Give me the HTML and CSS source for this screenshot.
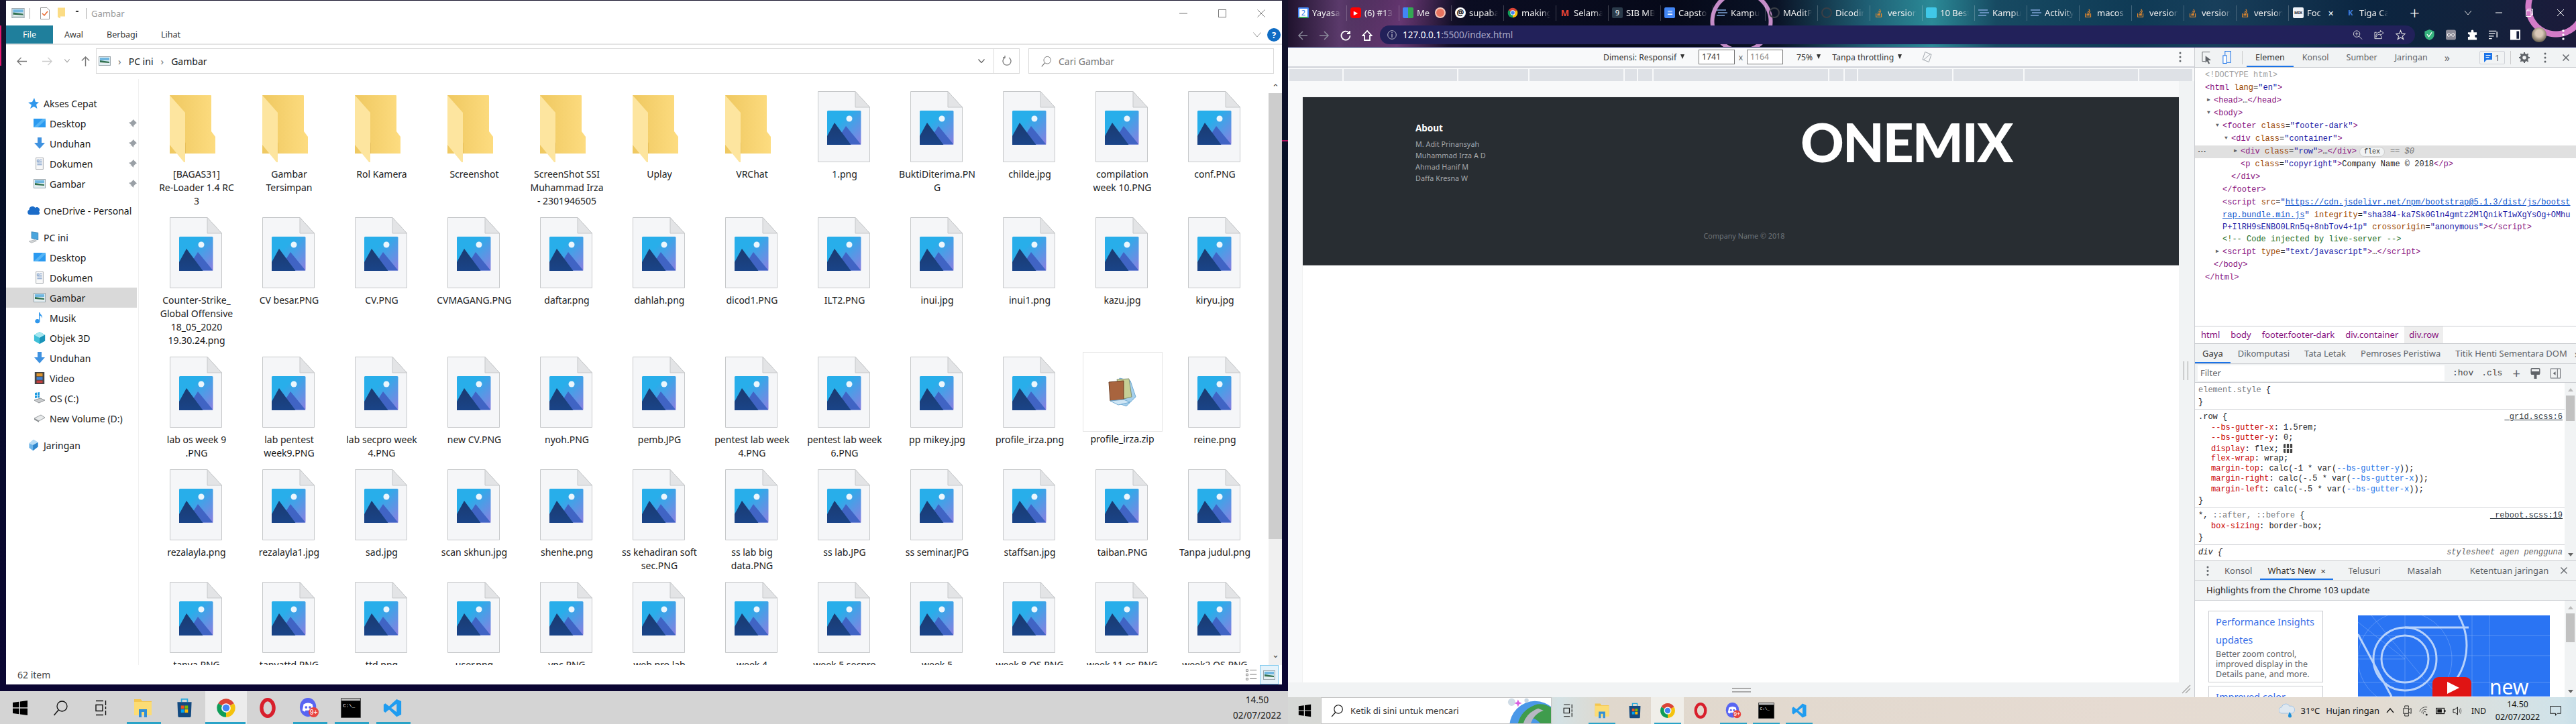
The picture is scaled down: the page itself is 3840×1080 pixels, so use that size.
FILE: index.html
```html
<!DOCTYPE html>
<html lang="en">
<head>
  <meta charset="UTF-8" />
  <title>Gambar</title>
  <link rel="stylesheet" href="styles.css">
</head>
<body>

<svg class="defs" width="0" height="0">
  <defs>
    <linearGradient id="sky" x1="0" y1="0" x2="1" y2="1"><stop offset="0.35" stop-color="#28aeea"/><stop offset="1" stop-color="#8a7fe0"/></linearGradient>
    <linearGradient id="navy" x1="0" y1="0" x2="0" y2="1"><stop offset="0" stop-color="#1a3a70"/><stop offset="1" stop-color="#1a4488"/></linearGradient>
    <linearGradient id="fold" x1="0" y1="0" x2="1" y2="0"><stop offset="0" stop-color="#efc860"/><stop offset="1" stop-color="#fddc80"/></linearGradient>
    <symbol id="file" viewBox="0 0 78 106">
      <path d="M.5.5H56L77.500 24V105.500H.5Z" fill="#f5f6f8" stroke="#c6c8ca"/>
      <path d="M56 .5V24H77.500Z" fill="#e3e4e6" stroke="#c6c8ca"/>
      <rect x="14" y="29" width="50.500" height="50.500" rx="1.500" fill="url(#sky)"/>
      <circle cx="47" cy="41" r="4.500" fill="#fff" fill-opacity=".9"/>
      <path d="M33 66 42 52 64.500 79.500H48Z" fill="#4064c4"/>
      <path d="M14 67 25 47 49.500 80H14Z" fill="url(#navy)"/>
    </symbol>
    <symbol id="folder" viewBox="0 0 78 106">
      <path d="M0 6H61Q62 6 62 7V60L68 68V93H0Z" fill="url(#fold)"/>
      <path d="M22 93V80L24 76V93Z" fill="#e8c05a"/>
      <path d="M0 6 23 32V107L22 107 0 80Z" fill="#fde59f"/>
    </symbol>
    <symbol id="pic" viewBox="0 0 18 14">
      <rect x=".5" y=".5" width="17" height="13" fill="#dfeff5" stroke="#9aa5ab"/>
      <rect x="2" y="2" width="14" height="4" fill="#6fb6e0"/>
      <path d="M2 6 16 8V12H2Z" fill="#31704f"/>
      <path d="M2 9 16 10V12H2Z" fill="#e8eef0"/>
    </symbol>
    <symbol id="star" viewBox="0 0 18 18"><path d="M10 1 12 7 17 7.500 13 11 14.500 17 9.500 14 4 17 6 11.500 1 8 7 7Z" fill="#2f97ec"/></symbol>
    <symbol id="desktop" viewBox="0 0 18 14"><rect width="18" height="13" fill="#2b9af0"/><path d="M0 13 14 0H18V2L6 13Z" fill="#55b4f5"/></symbol>
    <symbol id="down" viewBox="0 0 18 18"><path d="M6 0H12V8H17L9 17 1 8H6Z" fill="#3f92e0"/></symbol>
    <symbol id="doc" viewBox="0 0 18 20"><path d="M3 .5H15V19.500H3Z" fill="#f8f8f8" stroke="#9ea3a8"/><path d="M5 4H8V7H5ZM9 4H13M9 6H13M5 9H13M5 12H13" stroke="#5f88bd" fill="none"/></symbol>
    <symbol id="pin" viewBox="0 0 14 14"><path d="M8 0 14 6 12 7 9 10 8.500 13 4.500 9 1 13 5 8.500 1 5 4 4.500 7 2Z" fill="#9aa0a6"/></symbol>
    <symbol id="cloud" viewBox="0 0 22 18"><path d="M5 17A5 5 0 0 1 3 7.500 6 6 0 0 1 14 4 5 5 0 0 1 21 11 3.500 3.500 0 0 1 18 17Z" fill="#1b6cc8"/></symbol>
    <symbol id="pc" viewBox="0 0 20 24"><path d="M6 1 19 3V17L6 14Z" fill="#4aa5dd" stroke="#2d79ad"/><path d="M1 20 12 17 16 19 6 23Z" fill="#d3d6d8" stroke="#a4a8ab"/></symbol>
    <symbol id="note" viewBox="0 0 14 20"><path d="M6 1H7.500C8 5 13 6 11 11 11 8 9 7 7.500 6.500V16A4 3.500 0 1 1 6 13Z" fill="#2f97ec"/></symbol>
    <symbol id="cube" viewBox="0 0 18 20"><path d="M9 0 18 5V15L9 20 0 15V5Z" fill="#3fc0d8"/><path d="M9 0 18 5 9 10 0 5Z" fill="#a5e6ef"/><path d="M9 10 18 5V15L9 20Z" fill="#1a93b8"/></symbol>
    <symbol id="film" viewBox="0 0 16 20"><rect width="16" height="20" fill="#444"/><rect x="3" y="2" width="10" height="5" fill="#e0952d"/><rect x="3" y="8" width="10" height="5" fill="#3f7fd0"/><rect x="3" y="14" width="10" height="4" fill="#c43d3d"/></symbol>
    <symbol id="drive-c" viewBox="0 0 18 18"><path d="M1 12 10 9 17 12 8 16Z" fill="#c9ccce" stroke="#8f9396"/><path d="M2 1 5 .5V4L2 4.500ZM6 .5 9 0V4L6 4.500ZM2 5.500 5 5V8.500L2 9ZM6 5 9 4.500V8L6 8.500Z" fill="#1e9be0"/></symbol>
    <symbol id="drive" viewBox="0 0 18 12"><path d="M1 6 11 1 17 5 8 10Z" fill="#e8eaeb" stroke="#979b9e"/><path d="M1 6 8 10V12L1 8Z" fill="#8a8e91"/></symbol>
    <symbol id="net" viewBox="0 0 18 22"><path d="M9 1 17 6V14L8 21 1 16V8Z" fill="#6db4e8"/><path d="M9 1 17 6 8 11 1 8Z" fill="#b6dcf5"/><path d="M8 11 17 6V14L8 21Z" fill="#2f86cc"/></symbol>

    <symbol id="win" viewBox="0 0 24 24"><path d="M1 4 10.500 2.700V11.300H1ZM12 2.500 23 1V11.300H12ZM1 12.700H10.500V21.300L1 20ZM12 12.700H23V23L12 21.500Z" fill="#000"/></symbol>
    <symbol id="lens" viewBox="0 0 24 24"><circle cx="14.500" cy="9.500" r="7.500" fill="none" stroke="#111" stroke-width="1.300"/><path d="M9.300 15 2.500 23" stroke="#111" stroke-width="1.500"/></symbol>
    <symbol id="tview" viewBox="0 0 24 24"><path d="M5 1.500H16M5 22.500H16M5 7.500H15V16.500H5ZM19.500 1V8M19.500 10V14M19.500 16V23" stroke="#111" stroke-width="1.400" fill="none"/></symbol>
    <symbol id="explorer" viewBox="0 0 28 30"><path d="M1 2H11L13 5H27V25H1Z" fill="#f4c64f"/><path d="M1 6H27V26H1Z" fill="#fcdc74"/><path d="M8 29V17H20V29H16V21H12V29Z" fill="#2f8fd8"/></symbol>
    <symbol id="store" viewBox="0 0 28 34"><path d="M9 7V2H19V7" fill="none" stroke="#27a9dc" stroke-width="2"/><path d="M2 7H26L25 31Q25 33 23 33H5Q3 33 3 31Z" fill="#134a80"/><rect x="8" y="13" width="5.500" height="5.500" fill="#f25022"/><rect x="14.500" y="13" width="5.500" height="5.500" fill="#7fba00"/><rect x="8" y="19.500" width="5.500" height="5.500" fill="#00a4ef"/><rect x="14.500" y="19.500" width="5.500" height="5.500" fill="#ffb900"/></symbol>
    <symbol id="chrome" viewBox="0 0 24 24">
      <path d="M2.500 6.500A11 11 0 0 1 21.500 6.500L12 12Z" fill="#db4437"/>
      <path d="M21.500 6.500A11 11 0 0 1 12 23L12 12Z" fill="#f4c20d"/>
      <path d="M12 23A11 11 0 0 1 2.500 6.500L12 12Z" fill="#0f9d58"/>
      <circle cx="12" cy="12" r="5.500" fill="#fff"/><circle cx="12" cy="12" r="4.200" fill="#4285f4"/>
    </symbol>
    <symbol id="opera" viewBox="0 0 24 28"><ellipse cx="12" cy="14" rx="8.500" ry="11.500" fill="none" stroke="#d81f2c" stroke-width="5"/></symbol>
    <symbol id="discord" viewBox="0 0 30 32">
      <ellipse cx="13" cy="15" rx="13" ry="15" fill="#5865f2"/>
      <path d="M6 10Q13 6 20 10L22 20 18 22 17 20H9L8 22 4 20Z" fill="#fff"/>
      <circle cx="10" cy="15" r="2" fill="#5865f2"/><circle cx="16" cy="15" r="2" fill="#5865f2"/>
      <circle cx="22" cy="23" r="8" fill="#e8433f"/>
      <text x="22" y="27" font-size="11" font-family="Liberation Sans" fill="#fff" text-anchor="middle">9+</text>
    </symbol>
    <symbol id="cmd" viewBox="0 0 28 28"><rect width="28" height="28" fill="#000" stroke="#8d8d8d"/><rect x="1" y="1" width="26" height="3" fill="#bbb"/><text x="3" y="13" font-size="7" font-family="Liberation Mono" fill="#fff">C:\_</text></symbol>
    <symbol id="vscode" viewBox="0 0 24 24"><path d="M17 1.500 8 10 3.500 6.500 1.500 8V16L3.500 17.500 8 14 17 22.500 22.500 20V4ZM17 7V17L10.500 12Z" fill="#1f9cf0" fill-rule="evenodd"/></symbol>

    <symbol id="stack" viewBox="0 0 16 18"><path d="M3 10V16H12V10M5 13.500H10M5 11.500 10 12M5.500 9 10 10.500M7 6 10.500 9M9 3 11 7.500" stroke="#e2892f" stroke-width="1.300" fill="none"/></symbol>
    <symbol id="gh" viewBox="0 0 16 16"><circle cx="8" cy="8" r="7" fill="none" stroke="#3a3f46" stroke-width="2"/></symbol>
    <symbol id="lines" viewBox="0 0 16 12"><path d="M0 2H14M2 6H16M0 10H12" stroke="#7fa4d8" stroke-width="1.500"/></symbol>
  </defs>
</svg>

<!-- left monitor -->
<div class="screen">
  <div class="desk">
    <div class="peek-pink"></div>
    <div class="peek-right"></div>
    <div class="explorer">

      <div class="title-row">
        <svg class="t-pic"><use href="#pic"/></svg>
        <span class="t-sep"></span>
        <svg class="t-check" viewBox="0 0 14 18"><path d="M.5.5H10L13.500 4V17.500H.5Z" fill="#fff" stroke="#999"/><path d="M3 9 6 12 11 6" stroke="#e8662a" stroke-width="1.500" fill="none"/></svg>
        <svg class="t-fold" viewBox="0 0 12 16"><path d="M0 0H11V13H4V16L0 14Z" fill="#fbdc85"/></svg>
        <span class="t-drop"></span>
        <span class="t-sep"></span>
        <span class="t-name">Gambar</span>
        <span class="win-btns">
          <svg viewBox="0 0 12 12"><path d="M0 6H12" stroke="#777"/></svg>
          <svg viewBox="0 0 12 12"><rect x=".5" y=".5" width="11" height="11" fill="none" stroke="#777"/></svg>
          <svg viewBox="0 0 12 12"><path d="M.5.5 11.500 11.500M11.500.5 .5 11.500" stroke="#777"/></svg>
        </span>
      </div>

      <div class="ribbon">
        <span class="rib-file">File</span>
        <span class="rib-tab">Awal</span>
        <span class="rib-tab">Berbagi</span>
        <span class="rib-tab">Lihat</span>
        <span class="rib-end">
          <svg class="rib-chev" viewBox="0 0 12 8"><path d="M.5.5 6 7 11.500.5" stroke="#999" fill="none"/></svg>
          <span class="rib-help">?</span>
        </span>
      </div>

      <div class="nav-row">
        <div class="nav-arrows">
          <svg viewBox="0 0 16 14"><path d="M16 7H2M7 1 1 7 7 13" stroke="#777" stroke-width="1.500" fill="none"/></svg>
          <svg viewBox="0 0 16 14"><path d="M0 7H14M9 1 15 7 9 13" stroke="#ccc" stroke-width="1.500" fill="none"/></svg>
          <svg class="nav-mini" viewBox="0 0 8 6"><path d="M.5.5 4 5 7.500.5" stroke="#777" fill="none"/></svg>
          <svg viewBox="0 0 14 16"><path d="M7 16V2M1 7 7 1 13 7" stroke="#777" stroke-width="1.500" fill="none"/></svg>
        </div>
        <div class="addr">
          <svg class="addr-pic"><use href="#pic"/></svg>
          <span class="crumb-gt">›</span><span>PC ini</span>
          <span class="crumb-gt">›</span><span>Gambar</span>
          <svg class="addr-chev" viewBox="0 0 10 6"><path d="M.5.5 5 5.500 9.500.5" stroke="#666" stroke-width="1.300" fill="none"/></svg>
          <span class="addr-refresh"><svg viewBox="0 0 14 16"><path d="M4 3A6 6 0 1 0 10 3M4 0V3H1" stroke="#777" stroke-width="1.300" fill="none"/></svg></span>
        </div>
        <div class="search-box">
          <svg viewBox="0 0 24 24"><use href="#lens"/></svg>
          <span>Cari Gambar</span>
        </div>
      </div>

      <div class="ex-body">
        <nav class="side">
          <div class="s-row top"><svg class="s-ic"><use href="#star"/></svg>Akses Cepat</div>
          <div class="s-row"><svg class="s-ic"><use href="#desktop"/></svg>Desktop<svg class="s-pin"><use href="#pin"/></svg></div>
          <div class="s-row"><svg class="s-ic"><use href="#down"/></svg>Unduhan<svg class="s-pin"><use href="#pin"/></svg></div>
          <div class="s-row"><svg class="s-ic"><use href="#doc"/></svg>Dokumen<svg class="s-pin"><use href="#pin"/></svg></div>
          <div class="s-row"><svg class="s-ic"><use href="#pic"/></svg>Gambar<svg class="s-pin"><use href="#pin"/></svg></div>
          <div class="s-row top gap"><svg class="s-ic"><use href="#cloud"/></svg>OneDrive - Personal</div>
          <div class="s-row top gap"><svg class="s-ic"><use href="#pc"/></svg>PC ini</div>
          <div class="s-row"><svg class="s-ic"><use href="#desktop"/></svg>Desktop</div>
          <div class="s-row"><svg class="s-ic"><use href="#doc"/></svg>Dokumen</div>
          <div class="s-row sel"><svg class="s-ic"><use href="#pic"/></svg>Gambar</div>
          <div class="s-row"><svg class="s-ic"><use href="#note"/></svg>Musik</div>
          <div class="s-row"><svg class="s-ic"><use href="#cube"/></svg>Objek 3D</div>
          <div class="s-row"><svg class="s-ic"><use href="#down"/></svg>Unduhan</div>
          <div class="s-row"><svg class="s-ic"><use href="#film"/></svg>Video</div>
          <div class="s-row"><svg class="s-ic"><use href="#drive-c"/></svg>OS (C:)</div>
          <div class="s-row"><svg class="s-ic"><use href="#drive"/></svg>New Volume (D:)</div>
          <div class="s-row top gap"><svg class="s-ic"><use href="#net"/></svg>Jaringan</div>
        </nav>

        <main class="files">
          <div class="item"><svg class="ico"><use href="#folder"/></svg><div class="name">[BAGAS31]<br>Re-Loader 1.4 RC<br>3</div></div>
          <div class="item"><svg class="ico"><use href="#folder"/></svg><div class="name">Gambar<br>Tersimpan</div></div>
          <div class="item"><svg class="ico"><use href="#folder"/></svg><div class="name">Rol Kamera</div></div>
          <div class="item"><svg class="ico"><use href="#folder"/></svg><div class="name">Screenshot</div></div>
          <div class="item"><svg class="ico"><use href="#folder"/></svg><div class="name">ScreenShot SSI<br>Muhammad Irza<br>- 2301946505</div></div>
          <div class="item"><svg class="ico"><use href="#folder"/></svg><div class="name">Uplay</div></div>
          <div class="item"><svg class="ico"><use href="#folder"/></svg><div class="name">VRChat</div></div>
          <div class="item"><svg class="ico"><use href="#file"/></svg><div class="name">1.png</div></div>
          <div class="item"><svg class="ico"><use href="#file"/></svg><div class="name">BuktiDiterima.PN<br>G</div></div>
          <div class="item"><svg class="ico"><use href="#file"/></svg><div class="name">childe.jpg</div></div>
          <div class="item"><svg class="ico"><use href="#file"/></svg><div class="name">compilation<br>week 10.PNG</div></div>
          <div class="item"><svg class="ico"><use href="#file"/></svg><div class="name">conf.PNG</div></div>

          <div class="item"><svg class="ico"><use href="#file"/></svg><div class="name">Counter-Strike_<br>Global Offensive<br>18_05_2020<br>19.30.24.png</div></div>
          <div class="item"><svg class="ico"><use href="#file"/></svg><div class="name">CV besar.PNG</div></div>
          <div class="item"><svg class="ico"><use href="#file"/></svg><div class="name">CV.PNG</div></div>
          <div class="item"><svg class="ico"><use href="#file"/></svg><div class="name">CVMAGANG.PNG</div></div>
          <div class="item"><svg class="ico"><use href="#file"/></svg><div class="name">daftar.png</div></div>
          <div class="item"><svg class="ico"><use href="#file"/></svg><div class="name">dahlah.png</div></div>
          <div class="item"><svg class="ico"><use href="#file"/></svg><div class="name">dicod1.PNG</div></div>
          <div class="item"><svg class="ico"><use href="#file"/></svg><div class="name">ILT2.PNG</div></div>
          <div class="item"><svg class="ico"><use href="#file"/></svg><div class="name">inui.jpg</div></div>
          <div class="item"><svg class="ico"><use href="#file"/></svg><div class="name">inui1.png</div></div>
          <div class="item"><svg class="ico"><use href="#file"/></svg><div class="name">kazu.jpg</div></div>
          <div class="item"><svg class="ico"><use href="#file"/></svg><div class="name">kiryu.jpg</div></div>

          <div class="item"><svg class="ico"><use href="#file"/></svg><div class="name">lab os week 9<br>.PNG</div></div>
          <div class="item"><svg class="ico"><use href="#file"/></svg><div class="name">lab pentest<br>week9.PNG</div></div>
          <div class="item"><svg class="ico"><use href="#file"/></svg><div class="name">lab secpro week<br>4.PNG</div></div>
          <div class="item"><svg class="ico"><use href="#file"/></svg><div class="name">new CV.PNG</div></div>
          <div class="item"><svg class="ico"><use href="#file"/></svg><div class="name">nyoh.PNG</div></div>
          <div class="item"><svg class="ico"><use href="#file"/></svg><div class="name">pemb.JPG</div></div>
          <div class="item"><svg class="ico"><use href="#file"/></svg><div class="name">pentest lab week<br>4.PNG</div></div>
          <div class="item"><svg class="ico"><use href="#file"/></svg><div class="name">pentest lab week<br>6.PNG</div></div>
          <div class="item"><svg class="ico"><use href="#file"/></svg><div class="name">pp mikey.jpg</div></div>
          <div class="item"><svg class="ico"><use href="#file"/></svg><div class="name">profile_irza.png</div></div>
          <div class="item">
            <div class="zip-frame">
              <svg class="zip-ic" viewBox="0 0 44 46">
                <path d="M18 2 34 6 42 30 28 44 12 38Z" fill="#a6d0ec" stroke="#6fa9d2"/>
                <path d="M14 4 32 3 36 30 20 34Z" fill="#c6cf96" stroke="#7f9070"/>
                <path d="M2 8 24 6 24 34 4 36Z" fill="#a8643e" stroke="#6b3d22"/>
                <path d="M4 36 24 34 34 38 16 42Z" fill="#cfe6f5" stroke="#6fa9d2"/>
              </svg>
            </div>
            <div class="name">profile_irza.zip</div>
          </div>
          <div class="item"><svg class="ico"><use href="#file"/></svg><div class="name">reine.png</div></div>

          <div class="item"><svg class="ico"><use href="#file"/></svg><div class="name">rezalayla.png</div></div>
          <div class="item"><svg class="ico"><use href="#file"/></svg><div class="name">rezalayla1.jpg</div></div>
          <div class="item"><svg class="ico"><use href="#file"/></svg><div class="name">sad.jpg</div></div>
          <div class="item"><svg class="ico"><use href="#file"/></svg><div class="name">scan skhun.jpg</div></div>
          <div class="item"><svg class="ico"><use href="#file"/></svg><div class="name">shenhe.png</div></div>
          <div class="item"><svg class="ico"><use href="#file"/></svg><div class="name">ss kehadiran soft<br>sec.PNG</div></div>
          <div class="item"><svg class="ico"><use href="#file"/></svg><div class="name">ss lab big<br>data.PNG</div></div>
          <div class="item"><svg class="ico"><use href="#file"/></svg><div class="name">ss lab.JPG</div></div>
          <div class="item"><svg class="ico"><use href="#file"/></svg><div class="name">ss seminar.JPG</div></div>
          <div class="item"><svg class="ico"><use href="#file"/></svg><div class="name">staffsan.jpg</div></div>
          <div class="item"><svg class="ico"><use href="#file"/></svg><div class="name">taiban.PNG</div></div>
          <div class="item"><svg class="ico"><use href="#file"/></svg><div class="name">Tanpa judul.png</div></div>

          <div class="item"><svg class="ico"><use href="#file"/></svg><div class="name">tanya.PNG</div></div>
          <div class="item"><svg class="ico"><use href="#file"/></svg><div class="name">tanyattd.PNG</div></div>
          <div class="item"><svg class="ico"><use href="#file"/></svg><div class="name">ttd.png</div></div>
          <div class="item"><svg class="ico"><use href="#file"/></svg><div class="name">user.png</div></div>
          <div class="item"><svg class="ico"><use href="#file"/></svg><div class="name">vpc.PNG</div></div>
          <div class="item"><svg class="ico"><use href="#file"/></svg><div class="name">web pro lab</div></div>
          <div class="item"><svg class="ico"><use href="#file"/></svg><div class="name">week 4</div></div>
          <div class="item"><svg class="ico"><use href="#file"/></svg><div class="name">week 5 secpro</div></div>
          <div class="item"><svg class="ico"><use href="#file"/></svg><div class="name">week 5</div></div>
          <div class="item"><svg class="ico"><use href="#file"/></svg><div class="name">week 8 OS.PNG</div></div>
          <div class="item"><svg class="ico"><use href="#file"/></svg><div class="name">week 11 os.PNG</div></div>
          <div class="item"><svg class="ico"><use href="#file"/></svg><div class="name">week2 OS.PNG</div></div>
        </main>

        <div class="ex-scroll">
          <span class="sb-arrow">⌃</span>
          <span class="sb-thumb"></span>
          <span class="sb-arrow low">⌄</span>
        </div>
      </div>

      <div class="status">
        <span class="st-count">62 item</span>
        <svg class="st-list" viewBox="0 0 18 24"><path d="M1 3H4V6H1ZM1 10H4V13H1ZM1 17H4V20H1ZM7 4H18M7 11H18M7 18H18" stroke="#777" fill="none"/></svg>
        <span class="st-large"><svg><use href="#pic"/></svg></span>
      </div>
    </div>
  </div>

  <div class="taskbar tb-left">
    <span class="tb-slot sys"><svg class="tb-sys"><use href="#win"/></svg></span>
    <span class="tb-slot sys"><svg class="tb-sys"><use href="#lens"/></svg></span>
    <span class="tb-slot sys"><svg class="tb-sys"><use href="#tview"/></svg></span>
    <span class="tb-slot on first-app"><svg class="tb-app"><use href="#explorer"/></svg></span>
    <span class="tb-slot"><svg class="tb-app"><use href="#store"/></svg></span>
    <span class="tb-slot on active"><svg class="tb-app"><use href="#chrome"/></svg></span>
    <span class="tb-slot"><svg class="tb-app"><use href="#opera"/></svg></span>
    <span class="tb-slot on"><svg class="tb-app"><use href="#discord"/></svg></span>
    <span class="tb-slot on"><svg class="tb-app"><use href="#cmd"/></svg></span>
    <span class="tb-slot on"><svg class="tb-app"><use href="#vscode"/></svg></span>
    <span class="tb-clock"><span>14.50</span><span>02/07/2022</span></span>
  </div>
</div>

<!-- right monitor -->
<div class="screen">
  <div class="chrome">
    <div class="wall">
      <div class="tabs">
        <div class="tab"><span class="fav f-cal">2</span><span class="tab-t">Yayasan</span></div>
        <div class="tab"><span class="fav f-yt">▶</span><span class="tab-t">(6) #13</span></div>
        <div class="tab"><span class="fav f-meet"></span><span class="tab-t short">Me</span><span class="rec"></span></div>
        <div class="tab"><span class="fav f-at">@</span><span class="tab-t">supabase</span></div>
        <div class="tab"><svg class="fav"><use href="#chrome"/></svg><span class="tab-t">making</span></div>
        <div class="tab"><span class="fav f-m">M</span><span class="tab-t">Selamat</span></div>
        <div class="tab"><span class="fav f-nine">9</span><span class="tab-t">SIB MB</span></div>
        <div class="tab"><span class="fav f-docs">≡</span><span class="tab-t">Capstone</span></div>
        <div class="tab"><svg class="fav"><use href="#lines"/></svg><span class="tab-t">Kampus</span></div>
        <div class="tab"><svg class="fav"><use href="#gh"/></svg><span class="tab-t">MAditP</span></div>
        <div class="tab"><svg class="fav"><use href="#gh"/></svg><span class="tab-t">Dicoding</span></div>
        <div class="tab"><svg class="fav"><use href="#stack"/></svg><span class="tab-t">version</span></div>
        <div class="tab"><span class="fav f-cy"></span><span class="tab-t">10 Best</span></div>
        <div class="tab"><svg class="fav"><use href="#lines"/></svg><span class="tab-t">Kampus</span></div>
        <div class="tab"><svg class="fav"><use href="#lines"/></svg><span class="tab-t">Activity</span></div>
        <div class="tab"><svg class="fav"><use href="#stack"/></svg><span class="tab-t">macos</span></div>
        <div class="tab"><svg class="fav"><use href="#stack"/></svg><span class="tab-t">version</span></div>
        <div class="tab"><svg class="fav"><use href="#stack"/></svg><span class="tab-t">version</span></div>
        <div class="tab"><svg class="fav"><use href="#stack"/></svg><span class="tab-t">version</span></div>
        <div class="tab cur"><span class="fav f-mix">MIX</span><span class="tab-t short">Foc</span><span class="tab-x">✕</span></div>
        <div class="tab cur"><span class="fav f-k">K</span><span class="tab-t">Tiga Cara</span></div>
        <span class="tab-plus">+</span>
        <span class="tab-ctl">
          <svg viewBox="0 0 12 8"><path d="M1 1 6 7 11 1" stroke="#ddd" fill="none"/></svg>
          <svg viewBox="0 0 12 8"><path d="M1 4H11" stroke="#fff"/></svg>
          <svg viewBox="0 0 12 12"><path d="M3 3V.5H10.500V9H8M.5 3H8V11.500H.5Z" stroke="#fff" fill="none"/></svg>
          <svg viewBox="0 0 12 12"><path d="M1 1 11 11M11 1 1 11" stroke="#fff"/></svg>
        </span>
      </div>
      <div class="toolbar">
        <svg class="tl" viewBox="0 0 16 16"><path d="M15 8H2M8 2 2 8 8 14" stroke="#8b8b9b" stroke-width="1.500" fill="none"/></svg>
        <svg class="tl" viewBox="0 0 16 16"><path d="M1 8H14M8 2 14 8 8 14" stroke="#8b8b9b" stroke-width="1.500" fill="none"/></svg>
        <svg class="tl" viewBox="0 0 16 16"><path d="M13 4A6.500 6.500 0 1 0 14.500 8M14 1V5H10" stroke="#fff" stroke-width="1.800" fill="none"/></svg>
        <svg class="tl" viewBox="0 0 16 16"><path d="M8 1 1.500 8H4V15H12V8H14.500Z" stroke="#fff" stroke-width="1.800" fill="none"/></svg>
        <div class="omni">
          <svg class="omni-i" viewBox="0 0 14 14"><circle cx="7" cy="7" r="6.300" stroke="#b9b9c9" fill="none"/><path d="M7 6V11M7 3V4.500" stroke="#b9b9c9" stroke-width="1.300"/></svg>
          <span class="url">127.0.0.1<span class="url-dim">:5500/index.html</span></span>
          <span class="omni-end">
            <svg viewBox="0 0 16 16"><circle cx="6.500" cy="6.500" r="5" stroke="#ddd" fill="none"/><path d="M10 10 15 15M6.500 4V9M4 6.500H9" stroke="#ddd" fill="none"/></svg>
            <svg viewBox="0 0 16 16"><path d="M10 1 15 5 10 9V7Q4 7 3 12 2 4 10 3.500ZM12 10V14H1V4H4" stroke="#ddd" fill="none"/></svg>
            <svg viewBox="0 0 16 16"><path d="M8 1 10 6 15 6.500 11 10 12.500 15 8 12 3.500 15 5 10 1 6.500 6 6Z" stroke="#ddd" stroke-width="1.200" fill="none"/></svg>
          </span>
        </div>
        <span class="ext">
          <svg viewBox="0 0 16 18"><path d="M8 0 16 3V9Q16 15 8 18 0 15 0 9V3Z" fill="#36b37e"/><path d="M4 8 7 12 12 5" stroke="#fff" stroke-width="1.500" fill="none"/></svg>
          <svg viewBox="0 0 16 16"><rect width="16" height="16" rx="3" fill="#8d8d99"/><path d="M5 5.500A2.500 2.500 0 1 0 5 10.500L11 5.500A2.500 2.500 0 1 1 11 10.500Z" stroke="#fff" fill="none"/></svg>
          <svg viewBox="0 0 16 16"><path d="M6 2Q6 0 8 0T10 2V4H15V8Q12 7 12 10T15 12V16H1V11Q4 12 4 9.500T1 7V4H6Z" fill="#fff"/></svg>
          <svg viewBox="0 0 16 16"><path d="M0 2H12M0 6H10M0 10H8M0 14H5M13 3V12" stroke="#fff" stroke-width="1.500" fill="none"/></svg>
          <svg viewBox="0 0 16 16"><path d="M1 1H15V15H1Z" stroke="#fff" stroke-width="2" fill="none"/><rect x="1" y="1" width="9" height="14" fill="#fff"/></svg>
          <span class="avatar"></span>
          <svg viewBox="0 0 4 16"><circle cx="2" cy="2" r="1.700" fill="#fff"/><circle cx="2" cy="8" r="1.700" fill="#fff"/><circle cx="2" cy="14" r="1.700" fill="#fff"/></svg>
        </span>
      </div>
    </div>

    <div class="work">
      <div class="device">
        <div class="dev-bar">
          <span>Dimensi: Responsif <i class="tri"></i></span>
          <span class="dims"><span class="dim-in">1741</span><span class="dim-x">x</span><span class="dim-in dim-grey">1164</span></span>
          <span>75% <i class="tri"></i></span>
          <span>Tanpa throttling <i class="tri"></i></span>
          <svg class="rot" viewBox="0 0 16 18"><path d="M5 1 15 5 11 17 1 13Z" stroke="#9aa0a6" fill="none"/><path d="M2 14 14 4" stroke="#9aa0a6"/></svg>
          <svg class="dev-kebab" viewBox="0 0 4 16"><circle cx="2" cy="2" r="1.500" fill="#5f6368"/><circle cx="2" cy="8" r="1.500" fill="#5f6368"/><circle cx="2" cy="14" r="1.500" fill="#5f6368"/></svg>
        </div>
        <div class="mq-bar">
          <span class="w80"></span><span class="w171"></span><span class="w106"></span><span class="w142"></span><span class="w20"></span><span class="w23"></span><span class="w262"></span><span class="w23"></span><span class="w20"></span><span class="w142"></span><span class="w106"></span><span class="w171"></span><span class="grow"></span>
        </div>
        <div class="viewport">
          <div class="page">
            <footer class="footer-dark">
              <div class="row">
                <div class="about">
                  <h3>About</h3>
                  <ul>
                    <li>M. Adit Prinansyah</li>
                    <li>Muhammad Irza A D</li>
                    <li>Ahmad Hanif M</li>
                    <li>Daffa Kresna W</li>
                  </ul>
                </div>
                <div class="brand">ONEMIX</div>
              </div>
              <p class="copyright">Company Name © 2018</p>
            </footer>
          </div>
          <div class="page-handle"></div>
        </div>
        <div class="page-foot">
          <svg class="corner" viewBox="0 0 14 14"><path d="M1 13 13 1M6 13 13 6" stroke="#aaa" stroke-width="1.500"/></svg>
          <span class="grip"></span>
        </div>
      </div>

      <aside class="devtools">
        <div class="dt-top">
          <svg class="dt-ic" viewBox="0 0 16 20"><path d="M13 1H1V16H6" stroke="#5f6368" fill="none"/><path d="M6 7 15 14 10.500 14.500 13 19 11 20 8.500 15.500 6 18Z" fill="#5f6368"/></svg>
          <svg class="dt-ic" viewBox="0 0 16 26"><rect x="4.500" y=".5" width="11" height="22" fill="none" stroke="#1a73e8" stroke-width="1.300"/><rect x=".7" y="9" width="7" height="15" fill="#fff" stroke="#1a73e8" stroke-width="1.300"/></svg>
          <span class="dt-sep"></span>
          <span class="dt-tab cur">Elemen</span>
          <span class="dt-tab">Konsol</span>
          <span class="dt-tab">Sumber</span>
          <span class="dt-tab">Jaringan</span>
          <span class="dt-more">»</span>
          <span class="dt-issues">
            <svg viewBox="0 0 12 14"><path d="M0 0H12V10H4L0 14Z" fill="#1a73e8"/><path d="M2.500 3.500H9.500M2.500 6.500H7.500" stroke="#fff"/></svg>1
          </span>
          <span class="dt-sep2"></span>
          <svg class="dt-gear" viewBox="0 0 16 16"><circle cx="8" cy="8" r="4.500" fill="none" stroke="#5f6368" stroke-width="3.500"/><path d="M8 0V3M8 13V16M0 8H3M13 8H16M2.300 2.300 4.400 4.400M11.600 11.600 13.700 13.700M13.700 2.300 11.600 4.400M4.400 11.600 2.300 13.700" stroke="#5f6368" stroke-width="2"/></svg>
          <svg class="dt-kebab" viewBox="0 0 4 16"><circle cx="2" cy="2" r="1.500" fill="#5f6368"/><circle cx="2" cy="8" r="1.500" fill="#5f6368"/><circle cx="2" cy="14" r="1.500" fill="#5f6368"/></svg>
          <svg class="dt-close" viewBox="0 0 10 10"><path d="M.5.5 9.500 9.500M9.500.5 .5 9.500" stroke="#5f6368" stroke-width="1.500"/></svg>
        </div>

        <div class="dom">
          <div class="ln l0 doctype">&lt;!DOCTYPE html&gt;</div>
          <div class="ln l0"><b>&lt;html</b> <u>lang</u>=<s>"en"</s><b>&gt;</b></div>
          <div class="ln l1"><i class="tw">▶</i><b>&lt;head&gt;</b>…<b>&lt;/head&gt;</b></div>
          <div class="ln l1"><i class="tw">▼</i><b>&lt;body&gt;</b></div>
          <div class="ln l2"><i class="tw">▼</i><b>&lt;footer</b> <u>class</u>=<s>"footer-dark"</s><b>&gt;</b></div>
          <div class="ln l3"><i class="tw">▼</i><b>&lt;div</b> <u>class</u>=<s>"container"</s><b>&gt;</b></div>
          <div class="ln l4 picked"><em class="dots">•••</em><i class="tw">▶</i><b>&lt;div</b> <u>class</u>=<s>"row"</s><b>&gt;</b>…<b>&lt;/div&gt;</b><span class="flexpill">flex</span><span class="eq">== <em>$0</em></span></div>
          <div class="ln l4"><b>&lt;p</b> <u>class</u>=<s>"copyright"</s><b>&gt;</b>Company Name © 2018<b>&lt;/p&gt;</b></div>
          <div class="ln l3"><b>&lt;/div&gt;</b></div>
          <div class="ln l2"><b>&lt;/footer&gt;</b></div>
          <div class="ln l2"><b>&lt;script</b> <u>src</u>=<s>"<a>https://cdn.jsdelivr.net/npm/bootstrap@5.1.3/dist/js/bootst</a></s></div>
          <div class="ln l2 tight"><s><a>rap.bundle.min.js</a>"</s> <u>integrity</u>=<s>"sha384-ka7Sk0Gln4gmtz2MlQnikT1wXgYsOg+OMhu</s></div>
          <div class="ln l2 tight"><s>P+IlRH9sENBO0LRn5q+8nbTov4+1p"</s> <u>crossorigin</u>=<s>"anonymous"</s><b>&gt;&lt;/script&gt;</b></div>
          <div class="ln l2 cmt">&lt;!-- Code injected by live-server --&gt;</div>
          <div class="ln l2"><i class="tw">▶</i><b>&lt;script</b> <u>type</u>=<s>"text/javascript"</s><b>&gt;</b>…<b>&lt;/script&gt;</b></div>
          <div class="ln l1"><b>&lt;/body&gt;</b></div>
          <div class="ln l0"><b>&lt;/html&gt;</b></div>
        </div>

        <div class="crumbs">
          <span>html</span><span>body</span><span>footer.footer-dark</span><span>div.container</span><span class="crumb-on">div.row</span>
        </div>

        <div class="sub-tabs">
          <span class="sub cur">Gaya</span>
          <span class="sub">Dikomputasi</span>
          <span class="sub">Tata Letak</span>
          <span class="sub">Pemroses Peristiwa</span>
          <span class="sub">Titik Henti Sementara DOM</span>
          <span class="sub-more">»</span>
        </div>

        <div class="filter-row">
          <span class="filter-in">Filter</span>
          <span class="f-tool">:hov</span>
          <span class="f-tool">.cls</span>
          <span class="f-plus">+</span>
          <svg class="f-ic" viewBox="0 0 14 16"><rect x=".7" y=".7" width="12.600" height="8" rx="1" fill="none" stroke="#5f6368" stroke-width="1.400"/><rect x=".7" y="5" width="12.600" height="5" fill="#5f6368"/><rect x="5" y="10" width="4" height="6" fill="#5f6368"/></svg>
          <svg class="f-ic" viewBox="0 0 16 16"><rect x=".5" y=".5" width="15" height="15" fill="none" stroke="#5f6368"/><path d="M11 1V15" stroke="#5f6368"/><path d="M8 5V11L4 8Z" fill="#5f6368"/></svg>
        </div>

        <div class="rules-wrap">
          <div class="rules">
            <div class="rule">
              <div class="r-head"><span class="grey">element.style</span> {</div>
              <div class="r-end">}</div>
            </div>
            <div class="rule">
              <div class="r-head">.row {<span class="src">_grid.scss:6</span></div>
              <div class="p"><span class="k">--bs-gutter-x</span>: 1.5rem;</div>
              <div class="p"><span class="k">--bs-gutter-y</span>: 0;</div>
              <div class="p"><span class="k">display</span>: flex; <span class="flexbtn"></span></div>
              <div class="p"><span class="k">flex-wrap</span>: wrap;</div>
              <div class="p"><span class="k">margin-top</span>: calc(-1 * var(<span class="v">--bs-gutter-y</span>));</div>
              <div class="p"><span class="k">margin-right</span>: calc(-.5 * var(<span class="v">--bs-gutter-x</span>));</div>
              <div class="p"><span class="k">margin-left</span>: calc(-.5 * var(<span class="v">--bs-gutter-x</span>));</div>
              <div class="r-end">}</div>
            </div>
            <div class="rule">
              <div class="r-head">*, <span class="grey">::after, ::before</span> {<span class="src">_reboot.scss:19</span></div>
              <div class="p"><span class="k">box-sizing</span>: border-box;</div>
              <div class="r-end">}</div>
            </div>
            <div class="rule">
              <div class="r-head ital">div {<span class="src plain">stylesheet agen pengguna</span></div>
            </div>
          </div>
          <div class="dt-scroll">
            <span class="up"></span><span class="dt-thumb"></span><span class="dn"></span>
          </div>
        </div>

        <div class="drawer">
          <div class="dr-tabs">
            <svg class="dr-kebab" viewBox="0 0 4 16"><circle cx="2" cy="2" r="1.600" fill="#5f6368"/><circle cx="2" cy="8" r="1.600" fill="#5f6368"/><circle cx="2" cy="14" r="1.600" fill="#5f6368"/></svg>
            <span class="dr-tab">Konsol</span>
            <span class="dr-tab cur">What's New <span class="dr-x">✕</span></span>
            <span class="dr-tab">Telusuri</span>
            <span class="dr-tab">Masalah</span>
            <span class="dr-tab">Ketentuan jaringan</span>
            <svg class="dr-close" viewBox="0 0 10 10"><path d="M.5.5 9.500 9.500M9.500.5 .5 9.500" stroke="#5f6368" stroke-width="1.300"/></svg>
          </div>
          <div class="dr-head">Highlights from the Chrome 103 update</div>
          <div class="dr-body">
            <div class="cards">
              <div class="card">
                <a class="card-t">Performance Insights updates</a>
                <p>Better zoom control, improved display in the Details pane, and more.</p>
              </div>
              <div class="card">
                <a class="card-t">Improved color picker</a>
              </div>
            </div>
            <div class="video">
              <svg class="video-art" viewBox="0 0 286 121">
                <g fill="none" stroke="#8fb8fa" stroke-opacity=".45">
                  <path d="M0 30H286M0 60H286M0 100H286M70 0V121M170 0V121M196 0V121"/>
                  <circle cx="70" cy="65" r="70"/>
                  <path d="M0 10 70 65M0 65 70 65M20 0 120 121"/>
                </g>
                <g fill="none" stroke="#b7d2fb" stroke-width="3">
                  <circle cx="70" cy="65" r="35"/>
                  <circle cx="70" cy="65" r="47"/>
                  <path d="M70 18H165M150 0A90 90 0 0 1 120 121M0 28 50 121"/>
                </g>
              </svg>
              <span class="yt"></span>
              <span class="video-new">new</span>
            </div>
            <div class="dt-scroll dr-scroll"><span class="up"></span><span class="dt-thumb"></span><span class="dn"></span></div>
          </div>
        </div>
      </aside>
    </div>
  </div>

  <div class="taskbar tb-right">
    <span class="r-slot"><svg class="tb-sys-s"><use href="#win"/></svg></span>
    <div class="tb-search">
      <svg class="tb-sys-s"><use href="#lens"/></svg>
      <span>Ketik di sini untuk mencari</span>
      <svg class="globe" viewBox="0 0 76 48"><circle cx="56" cy="54" r="48" fill="#4a98e8"/><path d="M24 48Q30 22 60 12Q76 10 88 20V48H66Q50 30 44 48Z" fill="#3f9c4d"/><path d="M34 48Q40 28 62 20L72 24Q54 30 48 48Z" fill="#b7b7c4"/><circle cx="12" cy="8" r="7" fill="#cfdce6"/><circle cx="40" cy="5" r="4" fill="#c7d6e2"/><path d="M24 3 26 8 31 10 26 12 24 17 22 12 17 10 22 8Z" fill="#d85fe0"/></svg>
    </div>
    <span class="r-slot wide"><svg class="tb-sys-s"><use href="#tview"/></svg></span>
    <span class="r-slot on"><svg class="tb-app-s"><use href="#explorer"/></svg></span>
    <span class="r-slot"><svg class="tb-app-s"><use href="#store"/></svg></span>
    <span class="r-slot on active"><svg class="tb-app-s"><use href="#chrome"/></svg></span>
    <span class="r-slot"><svg class="tb-app-s"><use href="#opera"/></svg></span>
    <span class="r-slot on"><svg class="tb-app-s"><use href="#discord"/></svg></span>
    <span class="r-slot on"><svg class="tb-app-s"><use href="#cmd"/></svg></span>
    <span class="r-slot on"><svg class="tb-app-s"><use href="#vscode"/></svg></span>
    <span class="tray">
      <svg class="weather" viewBox="0 0 24 22"><path d="M5 15A4.500 4.500 0 0 1 4 6 6.500 6.500 0 0 1 16 4.500 5 5 0 0 1 20 15Z" fill="#dfe8f0" stroke="#9fc3e6"/><path d="M16 13Q19 17 19 19A2.500 2.500 0 0 1 14 19Q14 17 16 13Z" fill="#1a8fd8"/></svg>
      <span class="temp">31°C</span>
      <span class="cond">Hujan ringan</span>
      <svg class="tr-chev" viewBox="0 0 12 8"><path d="M1 7 6 1 11 7" stroke="#111" stroke-width="1.300" fill="none"/></svg>
      <svg class="tr-ic" viewBox="0 0 14 18"><path d="M3 4V1H9V4M3 14V17H9V14" stroke="#222" fill="none"/><rect x="1" y="5" width="8" height="8" fill="none" stroke="#222"/><path d="M9 7 13 5V13L9 11" stroke="#222" fill="none"/></svg>
      <svg class="tr-ic" viewBox="0 0 16 16"><path d="M1 9A10 10 0 0 1 13 2M4 11A6 6 0 0 1 12 6M7 13A2.500 2.500 0 0 1 11 10" stroke="#444" fill="none"/><circle cx="12" cy="14" r="1.500" fill="#222"/></svg>
      <svg class="tr-ic" viewBox="0 0 16 12"><rect x=".7" y="1.700" width="12.600" height="8.600" fill="none" stroke="#111" stroke-width="1.300"/><rect x="2.500" y="3.500" width="7" height="5" fill="#111"/><rect x="14" y="4.500" width="1.500" height="3" fill="#111"/></svg>
      <svg class="tr-ic" viewBox="0 0 16 16"><path d="M1 5.500H4L8 2V14L4 10.500H1Z" stroke="#111" fill="none"/><path d="M10.500 5Q12 8 10.500 11M12.500 3.500Q15 8 12.500 12.500" stroke="#555" fill="none"/></svg>
      <span class="lang">IND</span>
      <span class="tr-clock"><span>14.50</span><span>02/07/2022</span></span>
      <svg class="notif" viewBox="0 0 18 16"><path d="M.6.6H17.400V12H12L9 15.200V12H.6Z" stroke="#111" fill="none"/></svg>
    </span>
  </div>
</div>

</body>
</html>
```

FILE: styles.css
```css
* {
  margin: 0;
  padding: 0;
  box-sizing: border-box;
}

html, body {
  width: 3840px;
  height: 1080px;
  overflow: hidden;
}

body {
  display: flex;
  font-family: "Noto Sans", "Open Sans", sans-serif;
  font-size: 14px;
  color: #1a1a1a;
  background: #0b0626;
}

.defs {
  position: absolute;
}

svg {
  display: block;
  flex: none;
}

.screen {
  width: 1920px;
  height: 1080px;
  display: flex;
  flex-direction: column;
}

/* left desktop */
.desk {
  position: relative;
  height: 1031px;
  padding: 1px 9px 10px;
  background: linear-gradient(180deg, #16132c 0, #061026 25%, #0b0633 100%);
}

.peek-pink {
  position: absolute;
  left: 0;
  top: 38px;
  width: 2px;
  height: 60px;
  background: #e6176f;
}

.peek-right {
  position: absolute;
  right: 0;
  top: 209px;
  width: 9px;
  height: 2px;
  background: #b0125f;
}

.explorer {
  height: 1020px;
  background: #fff;
  display: flex;
  flex-direction: column;
}

.title-row {
  height: 37px;
  display: flex;
  align-items: center;
  padding-left: 8px;
}

.t-pic {
  width: 20px;
  height: 15px;
}

.t-sep {
  width: 1px;
  height: 16px;
  background: #aaa;
  margin: 0 7px;
}

.t-check {
  width: 14px;
  height: 18px;
  margin: 0 12px 0 8px;
}

.t-fold {
  width: 12px;
  height: 17px;
}

.t-drop {
  width: 6px;
  height: 6px;
  margin: 0 9px 0 14px;
  border-top: 1px solid #111;
  border-left: 3px solid transparent;
  border-right: 3px solid transparent;
  box-shadow: 0 -2px 0 -1px #111;
  border-bottom: 3px solid transparent;
}

.t-drop + .t-sep {
  margin: 0 7px 0 1px;
}

.t-name {
  color: #999;
  font-size: 13px;
}

.win-btns {
  margin-left: auto;
  display: flex;
  gap: 46px;
  padding-right: 25px;
}

.win-btns svg {
  width: 12px;
  height: 12px;
}

.ribbon {
  height: 29px;
  display: flex;
  align-items: center;
  border-bottom: 2px solid #e4e4e4;
  font-size: 12.500px;
  color: #333;
}

.rib-file {
  width: 70px;
  height: 27px;
  line-height: 27px;
  text-align: center;
  background: #1f7f9c;
  color: #fff;
}

.rib-tab {
  margin-left: 17px;
  margin-right: 18px;
}

.rib-end {
  margin-left: auto;
  display: flex;
  align-items: center;
  gap: 9px;
  padding-right: 2px;
}

.rib-chev {
  width: 12px;
  height: 8px;
}

.rib-help {
  width: 20px;
  height: 20px;
  border-radius: 50%;
  background: #0f6cc4;
  color: #fff;
  text-align: center;
  line-height: 20px;
  font-size: 13px;
  font-weight: 700;
}

.nav-row {
  height: 51px;
  display: flex;
  padding: 5px 12px 8px 0;
}

.nav-arrows {
  width: 134px;
  display: flex;
  align-items: center;
  gap: 18px;
  padding-left: 16px;
}

.nav-arrows svg {
  width: 15px;
  height: 15px;
}

.nav-arrows .nav-mini {
  width: 8px;
  height: 6px;
}

.nav-arrows svg:nth-child(2) {
  margin-left: 5px;
}

.nav-arrows svg:nth-child(4) {
  margin-left: -2px;
}

.addr {
  width: 1377px;
  height: 38px;
  border: 1px solid #dadada;
  display: flex;
  align-items: center;
  padding-left: 3px;
  font-size: 14px;
}

.addr-pic {
  width: 18px;
  height: 14px;
}

.crumb-gt {
  color: #777;
  font-size: 15px;
  margin: 0 11px;
}

.addr-chev {
  width: 10px;
  height: 6px;
  margin-left: auto;
  margin-right: 13px;
}

.addr-refresh {
  width: 38px;
  height: 36px;
  border-left: 1px solid #dadada;
  display: flex;
  align-items: center;
  justify-content: center;
}

.addr-refresh svg {
  width: 14px;
  height: 16px;
}

.search-box {
  width: 366px;
  height: 38px;
  margin-left: 13px;
  border: 1px solid #dadada;
  display: flex;
  align-items: center;
  gap: 10px;
  padding-left: 17px;
  color: #777;
}

.search-box svg {
  width: 17px;
  height: 17px;
  opacity: .6;
}

.ex-body {
  height: 874px;
  display: flex;
  overflow: hidden;
}

.side {
  width: 198px;
  flex: none;
  padding-top: 21px;
  border-right: 1px solid #f0f0f0;
}

.s-row {
  width: 195px;
  height: 30px;
  display: flex;
  align-items: center;
  padding-left: 41px;
  white-space: nowrap;
}

.s-row.top {
  padding-left: 32px;
}

.s-row.gap {
  margin-top: 10px;
}

.s-row.sel {
  background: #d9d9d9;
}

.s-ic {
  width: 18px;
  height: 18px;
  margin-right: 6px;
}

.s-pin {
  width: 13px;
  height: 13px;
  margin-left: auto;
}

.files {
  flex: 1;
  display: grid;
  grid-template-columns: repeat(12, 138px);
  grid-auto-rows: auto;
  align-content: start;
  padding: 18px 0 0 17px;
  overflow: hidden;
}

.item {
  padding-bottom: 14px;
  display: flex;
  flex-direction: column;
  align-items: center;
}

.ico {
  width: 78px;
  height: 106px;
  margin-right: 2px;
}

.name {
  margin-top: 8px;
  line-height: 20px;
  text-align: center;
  white-space: nowrap;
}

.zip-frame {
  width: 119px;
  height: 119px;
  margin: -7px 0;
  border: 1px solid #e6e6e6;
  display: flex;
  align-items: center;
  justify-content: center;
}

.zip-ic {
  width: 44px;
  height: 46px;
}

.ex-scroll {
  width: 20px;
  flex: none;
  margin-left: auto;
  background: #f0f0f0;
  display: flex;
  flex-direction: column;
  font-size: 13px;
  color: #444;
  text-align: center;
}

.sb-arrow {
  height: 21px;
  background: #fff;
  line-height: 24px;
}

.sb-arrow.low {
  background: #f0f0f0;
  line-height: 10px;
}

.sb-thumb {
  height: 665px;
  background: #cdcdcd;
  margin-bottom: auto;
}

.status {
  height: 29px;
  display: flex;
  align-items: center;
  padding: 0 5px 0 17px;
  color: #444;
}

.st-count {
  margin-right: auto;
}

.st-list {
  width: 18px;
  height: 22px;
  margin-right: 4px;
}

.st-large {
  width: 28px;
  height: 29px;
  background: #e5f3fb;
  border: 1px solid #7ec9ee;
  display: flex;
  align-items: center;
  justify-content: center;
}

.st-large svg {
  width: 18px;
  height: 14px;
}

.taskbar {
  display: flex;
  align-items: center;
}

.tb-left {
  height: 49px;
  background: #d4d4d4;
  font-size: 13.500px;
}

.tb-slot {
  width: 62px;
  height: 49px;
  position: relative;
  display: flex;
  align-items: center;
  justify-content: center;
}

.tb-slot.sys {
  width: 60px;
}

.tb-slot.first-app {
  margin-left: 2px;
}

.tb-slot.active {
  background: #ececec;
}

.tb-slot.on::after {
  content: "";
  position: absolute;
  left: 7px;
  right: 4px;
  bottom: 0;
  height: 3px;
  background: #2aa3c7;
}

.tb-slot.active::after {
  left: 0;
  right: 2px;
}

.tb-sys {
  width: 24px;
  height: 24px;
}

.tb-app {
  width: 30px;
  height: 30px;
}

.tb-clock {
  margin-left: auto;
  width: 92px;
  display: flex;
  flex-direction: column;
  align-items: center;
  gap: 3px;
  line-height: 20px;
}

/* chrome */
.chrome {
  height: 1040px;
  display: flex;
  flex-direction: column;
}

.wall {
  height: 71px;
  border-bottom: 1px solid #3b3f74;
  background:
    radial-gradient(circle at 676px 32px, transparent 40px, #c58cc8 41px, #c58cc8 46px, transparent 47px),
    radial-gradient(circle at 1890px 10px, transparent 36px, #d37bc8 37px, #d37bc8 45px, transparent 46px),
    linear-gradient(100deg, transparent 5%, rgba(170, 90, 180, .45) 9%, transparent 13%),
    linear-gradient(90deg, #20132e 0, #5b3a6b 4%, #2b1838 9%, #0b0d22 14%, #060919 30%, #0a1326 38%, #1f5f74 45%, #2b8a97 50%, #174a62 55%, #0f3a55 66%, #183f5b 72%, #0b2540 84%, #12223c 92%, #1c1a3a 100%);
}

.tabs {
  height: 38px;
  display: flex;
  align-items: center;
  padding: 0 0 0 10px;
  font-size: 13px;
  color: #f0f0f0;
}

.tab {
  width: 78px;
  height: 23px;
  display: flex;
  align-items: center;
  gap: 5px;
  padding: 0 8px 0 5px;
  border-right: 1px solid rgba(255, 255, 255, .22);
  overflow: hidden;
  white-space: nowrap;
}

.tab.cur {
  border-right: 0;
  padding-left: 6px;
}

.tab-t {
  flex: 1;
  overflow: hidden;
  -webkit-mask-image: linear-gradient(90deg, #000 70%, transparent);
  mask-image: linear-gradient(90deg, #000 70%, transparent);
}

.tab-t.short {
  flex: none;
  width: 24px;
}

.fav {
  width: 16px;
  height: 16px;
  flex: none;
  font-size: 11px;
  line-height: 16px;
  text-align: center;
  color: #fff;
  border-radius: 2px;
  overflow: hidden;
}

.f-cal { background: #fff; color: #1a73e8; border: 2px solid #4285f4; border-bottom-color: #34a853; line-height: 12px; }
.f-yt { background: #f00; font-size: 8px; border-radius: 4px; }
.f-meet { background: linear-gradient(90deg, #4285f4 50%, #34a853 50%); }
.f-at { background: #fff; color: #111; border-radius: 50%; font-weight: 700; font-size: 12px; }
.f-m { background: transparent; color: #ea4335; font-weight: 700; font-size: 13px; }
.f-nine { background: #2a3a4a; }
.f-docs { background: #4285f4; font-size: 14px; }
.f-cy { background: #40c8e8; }
.f-mix { background: #eef2f8; color: #123; font-size: 6px; font-weight: 700; }
.f-k { background: transparent; color: #3f7fe0; font-weight: 700; }

.rec {
  width: 12px;
  height: 12px;
  flex: none;
  border-radius: 50%;
  background: #e8735f;
  box-shadow: 0 0 0 2px #f4c4b8;
}

.tab-x {
  font-size: 11px;
  margin-left: 2px;
  color: #fff;
}

.tab-plus {
  font-size: 26px;
  font-weight: 300;
  line-height: 1;
  color: #fff;
  margin-left: 24px;
}

.tab-ctl {
  margin-left: auto;
  display: flex;
  align-items: center;
  gap: 34px;
  padding-right: 17px;
}

.tab-ctl svg {
  width: 12px;
  height: 12px;
}

.toolbar {
  height: 32px;
  display: flex;
  align-items: flex-start;
  padding-left: 14px;
}

.tl {
  width: 16px;
  height: 16px;
  margin: 7px 16px 0 0;
}

.omni {
  width: 1543px;
  height: 28px;
  margin-left: -5px;
  background: #22215a;
  border-radius: 14px;
  display: flex;
  align-items: center;
  padding: 0 14px 0 11px;
  font-size: 13.500px;
  color: #fff;
}

.omni-i {
  width: 14px;
  height: 14px;
  margin-right: 9px;
}

.url-dim {
  color: #a9a8c8;
}

.omni-end {
  margin-left: auto;
  display: flex;
  gap: 17px;
}

.omni-end svg {
  width: 15px;
  height: 16px;
}

.ext {
  display: flex;
  align-items: center;
  height: 28px;
  gap: 17px;
  margin-left: 14px;
}

.ext svg {
  width: 15px;
  height: 16px;
}

.avatar {
  width: 22px;
  height: 22px;
  border-radius: 50%;
  background: radial-gradient(circle at 50% 40%, #d9c8b8 30%, #6a6250 75%);
}

.ext svg:last-child {
  width: 4px;
  margin-left: 6px;
}

.work {
  flex: 1;
  display: flex;
  min-height: 0;
}

.device {
  width: 1351px;
  display: flex;
  flex-direction: column;
  background: #f8f9fa;
}

.dev-bar {
  height: 30px;
  display: flex;
  align-items: center;
  padding-left: 470px;
  border-bottom: 2px solid #d0d3d9;
  font-size: 12.200px;
  color: #333;
  white-space: nowrap;
}

.dev-bar > span:first-child {
  width: 142px;
}

.tri {
  display: inline-block;
  width: 0;
  height: 0;
  margin-left: 3px;
  vertical-align: 2px;
  border-left: 3.500px solid transparent;
  border-right: 3.500px solid transparent;
  border-top: 7px solid #333;
}

.dims {
  width: 126px;
  display: flex;
  align-items: center;
  margin-right: 20px;
}

.dim-in {
  width: 54px;
  height: 22px;
  border: 1px solid #777;
  padding-left: 4px;
  line-height: 20px;
  background: #fff;
}

.dim-grey {
  color: #888;
}

.dim-x {
  width: 18px;
  text-align: center;
  color: #666;
}

.dims + span {
  margin-right: 17px;
}

.rot {
  width: 15px;
  height: 18px;
  margin-left: 30px;
}

.dev-kebab {
  width: 4px;
  height: 16px;
  margin-left: auto;
  margin-right: 19px;
}

.mq-bar {
  height: 18px;
  margin: 2px 3px 0 2px;
  display: flex;
  gap: 2px;
  flex: none;
}

.mq-bar span {
  background: #dee1e6;
}

.w80 { width: 79px; }
.w171 { width: 169px; }
.w106 { width: 104px; }
.w142 { width: 140px; }
.w20 { width: 18px; }
.w23 { width: 21px; }
.w262 { width: 260px; }
.grow { flex: 1; }

.viewport {
  height: 897px;
  flex: none;
  display: flex;
  padding: 24px 0 0 22px;
  min-height: 0;
}

.page {
  width: 1306px;
  background: #fff;
  box-shadow: 0 0 1px rgba(0, 0, 0, .2);
}

.page-handle {
  width: 23px;
  background: #f1f3f4;
  margin-top: -24px;
  position: relative;
}

.page-handle::after {
  content: "";
  position: absolute;
  left: 7px;
  top: 418px;
  width: 5px;
  height: 28px;
  border-left: 1px solid #999;
  border-right: 1px solid #999;
}

.page-foot {
  flex: 1;
  display: flex;
  align-items: center;
  justify-content: center;
  position: relative;
  background: #f1f3f4;
}

.grip {
  width: 28px;
  height: 7px;
  border-top: 2px solid #aaa;
  border-bottom: 2px solid #aaa;
}

.corner {
  position: absolute;
  right: 5px;
  top: 3px;
  width: 14px;
  height: 14px;
}

.footer-dark {
  height: 251px;
  background: #282d32;
  border-bottom: 1px solid #54585c;
  padding-top: 26px;
  color: #fff;
}

.row {
  display: flex;
  height: 173px;
  padding-left: 168px;
}

.about {
  width: 574px;
  padding-top: 11px;
}

.about h3 {
  font-size: 13.500px;
  font-weight: 700;
  line-height: 18px;
  margin-bottom: 6px;
}

.about ul {
  list-style: none;
}

.about li {
  height: 17px;
  line-height: 17px;
  font-size: 10.800px;
  color: #a4a8ac;
}

.brand {
  font-family: Lato, "Noto Sans", sans-serif;
  font-weight: 900;
  font-size: 80px;
  line-height: 80px;
  letter-spacing: -2px;
  white-space: nowrap;
}

.copyright {
  text-align: center;
  font-size: 10.800px;
  line-height: 16px;
  color: #6f7377;
  padding-left: 10px;
}

/* devtools */
.devtools {
  width: 569px;
  border-left: 1px solid #cbcdd1;
  display: flex;
  flex-direction: column;
  font-size: 13px;
  color: #5f6368;
  background: #fff;
  min-width: 0;
}

.dt-top {
  height: 30px;
  flex: none;
  display: flex;
  align-items: center;
  background: #f1f3f4;
  border-bottom: 1px solid #cbcdd1;
  padding-left: 10px;
}

.dt-ic {
  width: 15px;
  height: 20px;
  margin-right: 15px;
}

.dt-sep {
  width: 1px;
  height: 20px;
  background: #ccc;
  margin: 0 6px 0 0;
}

.dt-tab {
  height: 29px;
  line-height: 30px;
  padding: 0 13px;
  font-size: 12.500px;
}

.dt-tab.cur {
  color: #333;
  border-bottom: 2px solid #1a73e8;
}

.dt-more {
  font-size: 16px;
  margin-left: 12px;
}

.dt-issues {
  margin-left: 44px;
  width: 38px;
  height: 20px;
  display: flex;
  align-items: center;
  justify-content: center;
  gap: 4px;
  border: 1px solid #d0d3d9;
  border-radius: 2px;
}

.dt-issues svg {
  width: 12px;
  height: 14px;
}

.dt-sep2 {
  width: 1px;
  height: 20px;
  background: #ccc;
  margin-left: 8px;
}

.dt-gear {
  width: 16px;
  height: 16px;
  margin-left: 12px;
}

.dt-kebab {
  width: 4px;
  height: 16px;
  margin-left: 21px;
}

.dt-close {
  width: 10px;
  height: 10px;
  margin-left: 24px;
}

.dom {
  height: 386px;
  flex: none;
  padding-top: 2px;
  font-family: "Liberation Mono", "DejaVu Sans Mono", monospace;
  font-size: 12px;
  color: #222;
  white-space: nowrap;
  border-bottom: 1px solid #cbcdd1;
}

.ln {
  height: 19px;
  line-height: 19px;
  position: relative;
}

.ln.tight {
  height: 18px;
  line-height: 18px;
}

.ln b { font-weight: 400; color: #881280; }
.ln u { text-decoration: none; color: #994500; }
.ln s { text-decoration: none; color: #1a1aa6; }
.ln a { color: #1155cc; text-decoration: underline; }

.l0 { padding-left: 15px; }
.l1 { padding-left: 28px; }
.l2 { padding-left: 41px; }
.l3 { padding-left: 54px; }
.l4 { padding-left: 68px; }

.doctype { color: #a0a0a0; }
.cmt { color: #236e25; }

.tw {
  position: absolute;
  margin-left: -10px;
  font-style: normal;
  font-size: 8px;
  color: #5f6368;
  line-height: 16px;
}

.picked {
  background: #e0e0e0;
}

.dots {
  position: absolute;
  left: 4px;
  font-style: normal;
  font-size: 7px;
  color: #555;
}

.flexpill {
  display: inline-block;
  height: 15px;
  line-height: 13px;
  border: 1px solid #ccc;
  border-radius: 8px;
  background: #f1f3f4;
  padding: 0 6px;
  margin-left: 4px;
  font-size: 10px;
  color: #333;
}

.eq {
  margin-left: 8px;
  color: #777;
}

.crumbs {
  height: 26px;
  flex: none;
  display: flex;
  align-items: stretch;
  padding-left: 2px;
  border-bottom: 1px solid #cbcdd1;
  color: #881280;
  white-space: nowrap;
}

.crumbs span {
  padding: 0 7px;
  line-height: 25px;
  margin-right: 2px;
}

.crumb-on {
  background: #eeeeee;
}

.sub-tabs {
  height: 30px;
  flex: none;
  display: flex;
  align-items: center;
  background: #f1f3f4;
  border-bottom: 1px solid #cbcdd1;
  white-space: nowrap;
}

.sub {
  height: 29px;
  line-height: 29px;
  padding: 0 11px;
}

.sub.cur {
  color: #333;
  border-bottom: 2px solid #1a73e8;
}

.sub-more {
  margin-left: auto;
  margin-right: 9px;
  font-size: 16px;
}

.filter-row {
  height: 28px;
  flex: none;
  display: flex;
  align-items: center;
  background: #f1f3f4;
  border-bottom: 1px solid #cbcdd1;
  padding-left: 4px;
}

.filter-in {
  width: 368px;
  height: 23px;
  background: #fff;
  line-height: 23px;
  padding-left: 4px;
}

.f-tool {
  font-family: "Liberation Mono", monospace;
  font-size: 13px;
  color: #444;
  margin-left: 12px;
}

.f-plus {
  font-size: 20px;
  line-height: 1;
  margin-left: 15px;
}

.f-ic {
  width: 15px;
  height: 16px;
  margin-left: 15px;
}

.rules-wrap {
  height: 266px;
  flex: none;
  display: flex;
  border-bottom: 1px solid #cbcdd1;
}

.rules {
  flex: 1;
  font-family: "Liberation Mono", "DejaVu Sans Mono", monospace;
  font-size: 12px;
  color: #202124;
  min-width: 0;
}

.rule {
  padding: 2px 0 1px;
  border-bottom: 1px solid #d5d7da;
}

.rule:last-child {
  border-bottom: 0;
}

.r-head,
.r-end {
  height: 18px;
  line-height: 18px;
  padding-left: 5px;
  display: flex;
  white-space: pre;
}

.p {
  height: 15.300px;
  line-height: 15.300px;
  padding-left: 24px;
  white-space: pre;
}

.grey {
  color: #75797e;
}

.ital {
  font-style: italic;
}

.src {
  margin-left: auto;
  padding-right: 3px;
  text-decoration: underline;
  color: #303942;
}

.src.plain {
  text-decoration: none;
  color: #666;
}

.k { color: #c80000; }
.v { color: #1a73e8; }

.flexbtn {
  display: inline-block;
  width: 14px;
  height: 14px;
  vertical-align: -3px;
  border-radius: 2px;
  background:
    linear-gradient(#f4f4f4 0 0) 0 50%/100% 2px no-repeat,
    repeating-linear-gradient(90deg, #444 0 3px, #e4e4e4 3px 5px);
}

.dt-scroll {
  width: 17px;
  flex: none;
  background: #f1f3f4;
  display: flex;
  flex-direction: column;
  align-items: center;
}

.dt-scroll .up,
.dt-scroll .dn {
  width: 0;
  height: 0;
  margin: 8px 0 6px;
  border-left: 4px solid transparent;
  border-right: 4px solid transparent;
  border-bottom: 5px solid #bbb;
}

.dt-scroll .dn {
  margin: auto 0 6px;
  border-bottom: 0;
  border-top: 5px solid #666;
}

.dt-thumb {
  width: 13px;
  height: 38px;
  background: #c1c1c1;
}

.drawer {
  flex: 1;
  display: flex;
  flex-direction: column;
  min-height: 0;
}

.dr-tabs {
  height: 29px;
  flex: none;
  display: flex;
  align-items: center;
  background: #f1f3f4;
  border-bottom: 1px solid #cbcdd1;
  padding-left: 17px;
}

.dr-kebab {
  width: 4px;
  height: 15px;
  margin-right: 12px;
}

.dr-tab {
  height: 28px;
  line-height: 28px;
  padding: 0 11px;
  margin-right: 1px;
  white-space: nowrap;
}

.dr-tab.cur {
  color: #333;
  border-bottom: 2px solid #1a73e8;
  margin-right: 11px;
}

.dr-x {
  font-size: 10px;
  color: #444;
  margin-left: 4px;
}

.dr-tab:nth-of-type(4) {
  margin-right: 20px;
}

.dr-tab:nth-of-type(3) {
  margin-right: 18px;
}

.dr-close {
  width: 10px;
  height: 10px;
  margin-left: auto;
  margin-right: 13px;
}

.dr-head {
  height: 30px;
  flex: none;
  background: #f1f3f4;
  border-bottom: 1px solid #cbcdd1;
  padding-left: 17px;
  line-height: 28px;
  color: #202124;
}

.dr-body {
  flex: 1;
  display: flex;
  min-height: 0;
  overflow: hidden;
}

.cards {
  width: 191px;
  flex: none;
  padding: 15px 0 0 20px;
  display: flex;
  flex-direction: column;
  gap: 5px;
}

.card {
  width: 171px;
  border: 1px solid #cbcdd1;
  padding: 2px 10px 5px;
  flex: none;
}

.card:first-child {
  height: 107px;
}

.card-t {
  display: block;
  font-size: 14.500px;
  line-height: 27px;
  color: #3a6fe8;
}

.card p {
  font-size: 12.500px;
  line-height: 15px;
  color: #5f6368;
}

.video {
  width: 286px;
  height: 121px;
  margin: 22px 0 0 52px;
  flex: none;
  position: relative;
  background: #2a74f3;
  overflow: hidden;
}

.video-art {
  width: 286px;
  height: 121px;
}

.yt {
  position: absolute;
  left: 111px;
  top: 92px;
  width: 58px;
  height: 40px;
  border-radius: 9px;
  background: #e01414;
}

.yt::after {
  content: "";
  position: absolute;
  left: 22px;
  top: 7px;
  border-left: 18px solid #fff;
  border-top: 9px solid transparent;
  border-bottom: 9px solid transparent;
}

.video-new {
  position: absolute;
  left: 196px;
  top: 89px;
  font-size: 30px;
  line-height: 36px;
  color: #fff;
}

.dr-scroll {
  margin-left: auto;
}

.dr-scroll .dt-thumb {
  height: 43px;
}

/* right taskbar */
.tb-right {
  height: 40px;
  font-size: 13px;
  background: linear-gradient(90deg, #d6d8d6 0, #dcd8cf 19%, #d3e1e4 21%, #e0d8cd 25%, #e6dbd2 65%, #e3dcd2 85%, #d0e3ea 99%, #c9dfe8 100%);
}

.r-slot {
  width: 49px;
  height: 40px;
  position: relative;
  display: flex;
  align-items: center;
  justify-content: center;
}

.r-slot.wide {
  width: 48px;
  margin-right: 2px;
}

.r-slot.active {
  background: #f0eee9;
}

.r-slot.on::after {
  content: "";
  position: absolute;
  left: 5px;
  right: 4px;
  bottom: 0;
  height: 2px;
  background: #2aa3c7;
}

.tb-sys-s {
  width: 20px;
  height: 20px;
}

.tb-app-s {
  width: 24px;
  height: 24px;
}

.tb-search {
  width: 344px;
  height: 40px;
  background: #fff;
  border: 1px solid #c6c6c6;
  display: flex;
  align-items: center;
  padding-left: 13px;
  gap: 10px;
  color: #333;
  overflow: hidden;
}

.globe {
  width: 76px;
  height: 38px;
  margin-left: auto;
}

.tray {
  margin-left: auto;
  display: flex;
  align-items: center;
  font-size: 13px;
  color: #111;
  white-space: nowrap;
}

.weather {
  width: 24px;
  height: 22px;
  margin-right: 9px;
}

.temp {
  margin-right: 9px;
}

.tr-chev {
  width: 12px;
  height: 8px;
  margin: 0 12px 0 10px;
}

.tr-ic {
  width: 15px;
  height: 17px;
  margin-right: 10px;
}

.lang {
  margin-left: 3px;
  font-size: 12px;
}

.tr-clock {
  width: 68px;
  margin-left: 13px;
  display: flex;
  flex-direction: column;
  align-items: center;
  gap: 2px;
  line-height: 17px;
  font-size: 12.500px;
}

.notif {
  width: 17px;
  height: 15px;
  margin: 0 22px 0 14px;
}
```
